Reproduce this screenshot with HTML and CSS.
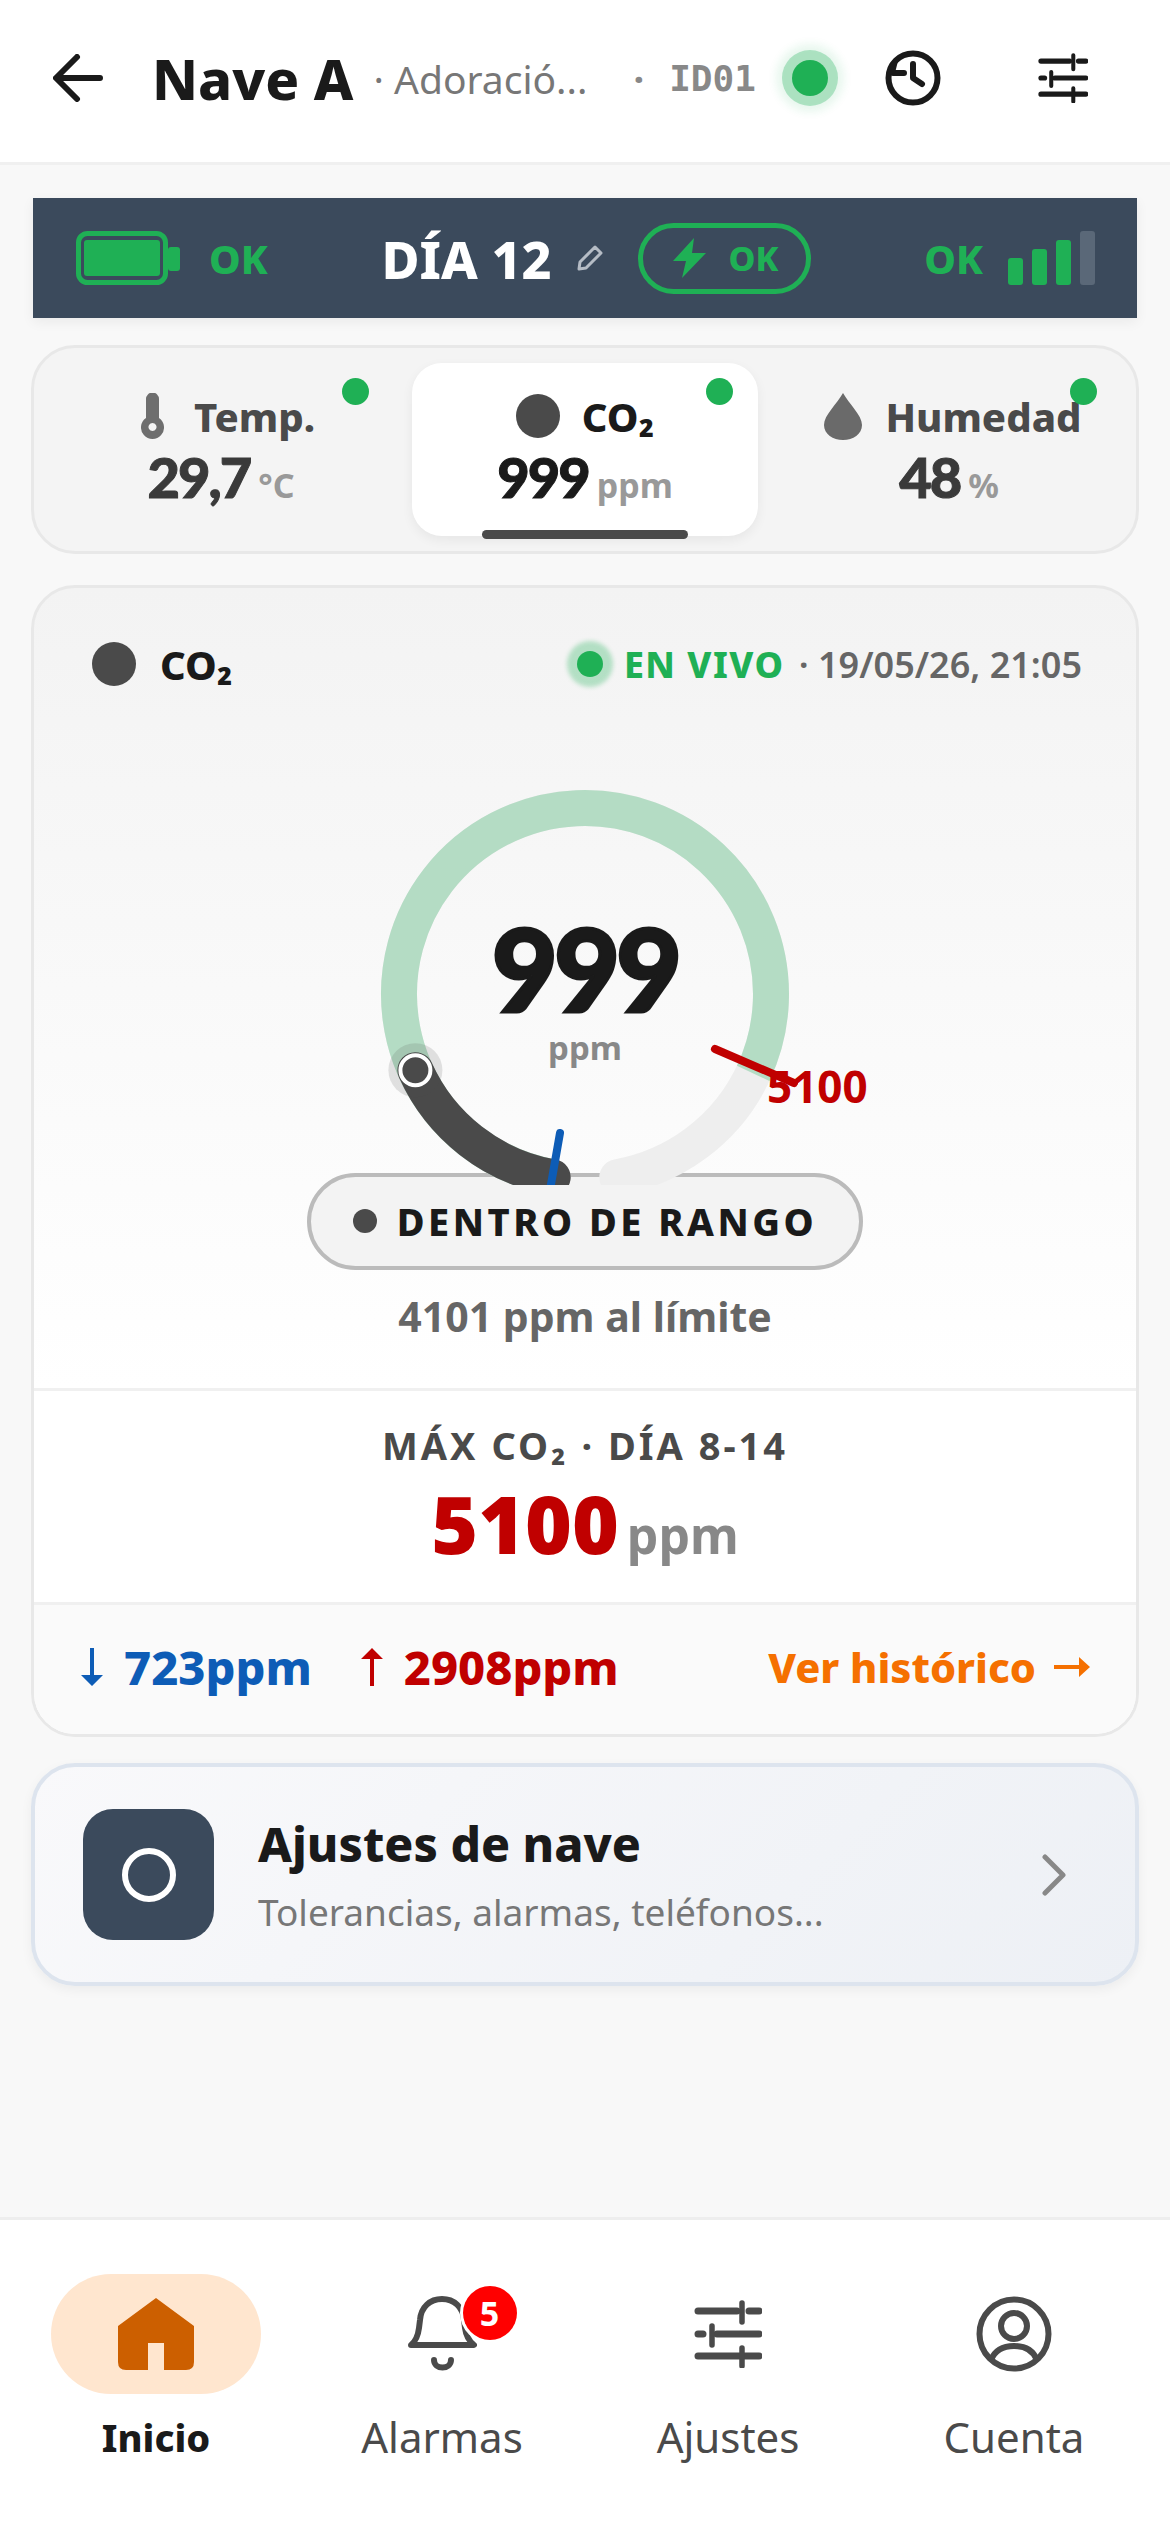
FILE: index.html
```html
<!DOCTYPE html>
<html lang="es">
  <head>
    <meta charset="UTF-8" />
    <meta name="viewport" content="width=device-width, initial-scale=1.0" />
    <title>Nave A</title>
    <link rel="stylesheet" href="styles.css">
  </head>
  <body>
    <svg class="defs" width="0" height="0">
      <symbol id="tune" viewBox="0 0 68 68">
        <path d="M4 11H43M55 11H65M4 34H9M23 34H65M4 56H65" stroke-width="7" stroke-linecap="round" />
        <path d="M48 3V22M18 26V45M48 48V66" stroke-width="5.500" stroke-linecap="round" />
      </symbol>
    </svg>

    <header class="topbar">
      <svg class="back" viewBox="0 0 50 48"><path d="M47 24H4M24 3L3 24L24 45" /></svg>
      <span class="title">Nave A</span>
      <span class="place">· Adoració...</span>
      <span class="sep">·</span>
      <span class="device">ID01</span>
      <span class="status-dot"></span>
      <svg class="history" viewBox="0 0 60 60">
        <circle cx="30" cy="30" r="24.500" />
        <path d="M10 25H21M30 16V30L39 36" />
        <path class="history-notch" d="M7 27V18L16 9L12 25Z" />
      </svg>
      <svg class="tune-top"><use href="#tune" /></svg>
    </header>

    <section class="banner">
      <div class="banner-group">
        <svg class="battery" viewBox="0 0 104 54">
          <rect x="2.500" y="2.500" width="87" height="49" rx="9" fill="none" stroke="#1fb055" stroke-width="5" />
          <rect x="8" y="9" width="76" height="36" rx="3" fill="#1fb055" />
          <rect x="92" y="16" width="12" height="24" rx="3" fill="#1fb055" />
        </svg>
        <span class="ok">OK</span>
      </div>
      <div class="banner-group banner-mid">
        <span class="day">DÍA 12</span>
        <svg class="pencil" viewBox="0 0 28 28"><path d="M3 25L4 18L19 3L25 9L10 24Z" /></svg>
        <span class="power">
          <svg class="bolt" viewBox="0 0 33 40"><path d="M21 0L0 23H13L9 40L33 15H19Z" /></svg>
          <span>OK</span>
        </span>
      </div>
      <div class="banner-group">
        <span class="ok ok-right">OK</span>
        <div class="bars">
          <i class="bar bar-1"></i><i class="bar bar-2"></i><i class="bar bar-3"></i><i class="bar bar-4"></i>
        </div>
      </div>
    </section>

    <section class="tabs">
      <div class="tab">
        <i class="tab-dot"></i>
        <div class="tab-label tab-label-temp">
          <svg class="thermo" viewBox="0 0 23 46"><path fill-rule="evenodd" d="M5 6a6.500 6.500 0 0 1 13 0V25a11.500 11.500 0 1 1-13 0ZM11.500 30a4 4 0 1 0 .01 0Z" /></svg>
          <span>Temp.</span>
        </div>
        <div class="tab-value">29,7<small>°C</small></div>
      </div>
      <div class="tab tab-active">
        <i class="tab-dot"></i>
        <div class="tab-label"><i class="gas-dot"></i><span>CO₂</span></div>
        <div class="tab-value">999<small>ppm</small></div>
        <i class="tab-line"></i>
      </div>
      <div class="tab">
        <i class="tab-dot"></i>
        <div class="tab-label tab-label-hum">
          <svg class="drop" viewBox="0 0 38 47"><path d="M19 0C25 11 38 22 38 32C38 41 29 47 19 47C9 47 0 41 0 32C0 22 13 11 19 0Z" /></svg>
          <span>Humedad</span>
        </div>
        <div class="tab-value">48<small>%</small></div>
      </div>
    </section>

    <section class="card">
      <div class="card-head">
        <div class="card-name"><i class="gas-dot"></i><span>CO₂</span></div>
        <div class="live">
          <i class="live-dot"></i>
          <span class="live-text">EN VIVO</span>
          <span class="live-date">· 19/05/26, 21:05</span>
        </div>
      </div>

      <div class="gauge">
        <svg class="gauge-svg" width="1102" height="425" viewBox="0 0 1102 425">
          <path d="M518.700 417.200A186 186 0 1 1 583.300 417.200" fill="none" stroke="#eeeeee" stroke-width="36" stroke-linecap="round" />
          <path d="M518.700 417.200A186 186 0 1 1 719.200 313.400" fill="none" stroke="#b4dcc4" stroke-width="36" />
          <path d="M518.700 417.200A186 186 0 0 1 381.400 310.200" fill="none" stroke="#4a4a4a" stroke-width="36" stroke-linecap="round" />
          <circle cx="381.400" cy="310.200" r="27" fill="#4a4a4a" fill-opacity="0.15" />
          <circle cx="381.400" cy="310.200" r="15" fill="#4a4a4a" stroke="#fff" stroke-width="4" />
          <path d="M526 373L516 430" stroke="#0d5cb6" stroke-width="8" stroke-linecap="round" />
          <path d="M681 289L760 323" stroke="#c00000" stroke-width="8" stroke-linecap="round" />
          <text class="limit-label" x="733" y="343">5100</text>
        </svg>
        <div class="gauge-center">
          <div class="gauge-value">999</div>
          <div class="gauge-unit">ppm</div>
        </div>
      </div>

      <div class="range-pill"><i class="range-dot"></i><span>DENTRO DE RANGO</span></div>
      <div class="to-limit">4101 ppm al límite</div>

      <div class="max-box">
        <div class="max-title">MÁX CO₂ · DÍA 8-14</div>
        <div class="max-value">5100<small>ppm</small></div>
      </div>

      <div class="card-foot">
        <svg class="arrow low-arrow" viewBox="0 0 24 38"><path d="M10 0H14V27H23L12 38L1 27H10Z" /></svg>
        <span class="low">723ppm</span>
        <svg class="arrow high-arrow" viewBox="0 0 24 38"><path d="M10 38H14V11H23L12 0L1 11H10Z" /></svg>
        <span class="high">2908ppm</span>
        <span class="more">Ver histórico</span>
        <svg class="more-arrow" viewBox="0 0 36 20"><path d="M0 8H25V0L36 10L25 20V12H0Z" /></svg>
      </div>
    </section>

    <section class="settings">
      <div class="settings-icon"><i></i></div>
      <div class="settings-text">
        <div class="settings-title">Ajustes de nave</div>
        <div class="settings-sub">Tolerancias, alarmas, teléfonos...</div>
      </div>
      <svg class="chevron" viewBox="0 0 24 42"><path d="M3 3L21 21L3 39" /></svg>
    </section>

    <nav class="nav">
      <div class="nav-item nav-active">
        <div class="nav-icon">
          <svg class="home" viewBox="0 0 76 72"><path d="M38 0L76 28V64Q76 72 68 72H46V45H30V72H8Q0 72 0 64V28Z" /></svg>
        </div>
        <span>Inicio</span>
      </div>
      <div class="nav-item">
        <div class="nav-icon">
          <div class="bell-wrap">
            <svg class="bell" viewBox="0 0 69 76">
              <path d="M3 49C8 45 10 40 11 32L12 24C13 11 22 3 34 3C46 3 55 11 56 24L57 32C58 40 61 45 66 49Z" />
              <path d="M26 64C26 74 43 74 43 64" />
            </svg>
            <b class="badge">5</b>
          </div>
        </div>
        <span>Alarmas</span>
      </div>
      <div class="nav-item">
        <div class="nav-icon"><svg class="tune-nav"><use href="#tune" /></svg></div>
        <span>Ajustes</span>
      </div>
      <div class="nav-item">
        <div class="nav-icon">
          <svg class="user" viewBox="0 0 76 76">
            <circle cx="38" cy="38" r="34.500" />
            <circle cx="38" cy="30" r="13" />
            <path d="M15 64C19 54 28 50 38 50C48 50 57 54 61 64" />
          </svg>
        </div>
        <span>Cuenta</span>
      </div>
    </nav>
  </body>
</html>
```

FILE: styles.css
```css
* {
  box-sizing: border-box;
}

body {
  margin: 0;
  width: 1170px;
  height: 2532px;
  overflow: hidden;
  display: flex;
  flex-direction: column;
  background-color: #f8f8f8;
  color: #1a1a1a;
  font-family: "Noto Sans", "Open Sans", sans-serif;
}

i {
  display: block;
}

.defs {
  position: absolute;
}

/* top bar */
.topbar {
  height: 165px;
  flex: none;
  display: flex;
  align-items: center;
  padding: 0 0 6px 53px;
  background-color: #fff;
  border-bottom: 3px solid #f0f0f0;
}

.back {
  width: 50px;
  height: 48px;
  fill: none;
  stroke: #1a1a1a;
  stroke-width: 6;
  stroke-linecap: round;
  stroke-linejoin: round;
}

.title {
  margin-left: 49px;
  font-size: 56px;
  font-weight: 800;
}

.place {
  margin-left: 20px;
  font-size: 39px;
  color: #777;
}

.sep {
  margin-left: 46px;
  font-size: 38px;
  font-weight: 700;
  color: #888;
}

.device {
  margin-left: 25px;
  font-family: "DejaVu Sans Mono", monospace;
  font-size: 36px;
  font-weight: 700;
  color: #888;
}

.status-dot {
  width: 36px;
  height: 36px;
  margin-left: 36px;
  border-radius: 50%;
  background-color: #1fb055;
  box-shadow: 0 0 0 10px rgba(31, 176, 85, 0.3), 0 0 8px 16px rgba(31, 176, 85, 0.1);
}

.history {
  width: 60px;
  height: 60px;
  margin-left: 55px;
  fill: none;
  stroke: #1a1a1a;
  stroke-width: 6;
  stroke-linecap: round;
  stroke-linejoin: round;
}

.history-notch {
  fill: #1a1a1a;
  stroke: none;
}

.tune-top {
  width: 50px;
  height: 50px;
  margin-left: 95px;
  fill: none;
  stroke: #1a1a1a;
}

/* status banner */
.banner {
  height: 120px;
  flex: none;
  margin: 33px 33px 0;
  padding: 0 42px 0 43px;
  display: flex;
  align-items: center;
  justify-content: space-between;
  background-color: #3b4a5c;
  box-shadow: 0 4px 12px rgba(0, 0, 0, 0.06);
}

.banner-group {
  display: flex;
  align-items: center;
}

.battery {
  width: 104px;
  height: 54px;
}

.ok {
  margin-left: 29px;
  font-size: 40px;
  font-weight: 800;
  color: #1fb055;
}

.ok-right {
  margin-left: 0;
  margin-right: 25px;
}

.day {
  font-size: 52px;
  font-weight: 800;
  color: #fff;
}

.pencil {
  width: 28px;
  height: 28px;
  margin-left: 24px;
  fill: none;
  stroke: #b5bcc5;
  stroke-width: 3;
  stroke-linejoin: round;
}

.power {
  width: 173px;
  height: 71px;
  margin-left: 34px;
  padding-left: 30px;
  display: flex;
  align-items: center;
  gap: 23px;
  border: 5px solid #1fb055;
  border-radius: 36px;
  font-size: 34px;
  font-weight: 800;
  color: #1fb055;
}

.bolt {
  width: 33px;
  height: 40px;
  fill: #1fb055;
}

.bars {
  display: flex;
  align-items: flex-end;
  gap: 9px;
  height: 54px;
}

.bar {
  width: 15px;
  border-radius: 3px;
  background-color: #1fb055;
}

.bar-1 {
  height: 27px;
}

.bar-2 {
  height: 36px;
}

.bar-3 {
  height: 45px;
}

.bar-4 {
  height: 54px;
  background-color: #5a6878;
}

/* sensor tabs */
.tabs {
  height: 209px;
  flex: none;
  margin: 27px 31px 0;
  padding: 15px 14px;
  display: grid;
  grid-template-columns: repeat(3, 346px);
  gap: 18px;
  background-color: #f4f4f4;
  border: 3px solid #e8e8e8;
  border-radius: 44px;
}

.tab {
  position: relative;
  display: flex;
  flex-direction: column;
  align-items: center;
  padding-top: 26px;
  border-radius: 30px;
}

.tab-active {
  background-color: #fff;
  box-shadow: 0 4px 12px rgba(0, 0, 0, 0.06);
}

.tab-dot {
  position: absolute;
  top: 15px;
  right: 25px;
  width: 27px;
  height: 27px;
  border-radius: 50%;
  background-color: #1fb055;
}

.tab-line {
  position: absolute;
  bottom: -3px;
  left: 70px;
  width: 206px;
  height: 9px;
  border-radius: 5px;
  background-color: #4a4a4a;
}

.tab-label {
  height: 54px;
  display: flex;
  align-items: center;
  gap: 22px;
  font-size: 40px;
  font-weight: 800;
  color: #4a4a4a;
}

.tab-label-temp {
  margin-left: 14px;
  gap: 30px;
}

.tab-label-hum {
  margin-left: 8px;
  gap: 23px;
}

.tab-active .tab-label {
  color: #1a1a1a;
}

.thermo {
  width: 23px;
  height: 46px;
  fill: #6e6e6e;
}

.drop {
  width: 38px;
  height: 47px;
  fill: #6a6a6a;
}

.gas-dot {
  width: 44px;
  height: 44px;
  border-radius: 50%;
  background-color: #4a4a4a;
}

.tab-value {
  margin-top: 2px;
  font-family: Lato, "Noto Sans", sans-serif;
  font-size: 56px;
  line-height: 64px;
  font-weight: 900;
  letter-spacing: -2px;
  color: #3a3a3a;
  -webkit-text-stroke: 1px currentColor;
}

.tab-active .tab-value {
  color: #1a1a1a;
}

.tab-value small {
  margin-left: 8px;
  font-family: "Noto Sans", sans-serif;
  font-size: 34px;
  font-weight: 700;
  letter-spacing: 0;
  color: #999;
  -webkit-text-stroke: 0;
}

/* main card */
.card {
  height: 1152px;
  flex: none;
  margin: 31px 31px 0;
  overflow: hidden;
  background: linear-gradient(#f3f3f3, #fff 800px);
  border: 3px solid #e8e8e8;
  border-radius: 44px;
}

.card-head {
  height: 152px;
  padding: 0 54px 0 58px;
  display: flex;
  align-items: center;
  justify-content: space-between;
}

.card-name {
  display: flex;
  align-items: center;
  gap: 24px;
  font-size: 40px;
  font-weight: 800;
}

.live {
  display: flex;
  align-items: center;
  font-size: 36px;
}

.live-dot {
  width: 26px;
  height: 26px;
  margin-right: 21px;
  border-radius: 50%;
  background-color: #1fb055;
  box-shadow: 0 0 4px 10px rgba(31, 176, 85, 0.3);
}

.live-text {
  font-weight: 800;
  letter-spacing: 1.500px;
  color: #1fb055;
}

.live-date {
  margin-left: 14px;
  font-weight: 600;
  color: #666;
}

.gauge {
  position: relative;
  z-index: 1;
  height: 425px;
  margin-top: 20px;
  overflow: hidden;
}

.gauge-svg {
  display: block;
}

.limit-label {
  font-size: 44px;
  font-weight: 700;
  fill: #c00000;
}

.gauge-center {
  position: absolute;
  top: 156px;
  left: 0;
  width: 100%;
  text-align: center;
}

.gauge-value {
  font-family: Lato, "Noto Sans", sans-serif;
  font-size: 114px;
  line-height: 104px;
  font-weight: 900;
  letter-spacing: -4px;
  -webkit-text-stroke: 3px #1a1a1a;
}

.gauge-unit {
  margin-top: 8px;
  font-size: 33px;
  line-height: 40px;
  font-weight: 700;
  color: #888;
}

.range-pill {
  width: 556px;
  height: 97px;
  margin: -12px auto 0;
  padding-bottom: 2px;
  display: flex;
  align-items: center;
  justify-content: center;
  gap: 20px;
  background-color: #f3f3f3;
  border: 4px solid #bbb;
  border-radius: 49px;
  font-size: 38px;
  font-weight: 800;
  letter-spacing: 3.500px;
}

.range-dot {
  width: 24px;
  height: 24px;
  border-radius: 50%;
  background-color: #4a4a4a;
}

.to-limit {
  margin-top: 20px;
  text-align: center;
  font-size: 41px;
  line-height: 52px;
  font-weight: 700;
  color: #666;
}

.max-box {
  height: 217px;
  margin-top: 46px;
  padding-top: 29px;
  text-align: center;
  background-color: #fff;
  border-top: 3px solid #f0f0f0;
  border-bottom: 3px solid #f0f0f0;
}

.max-title {
  font-size: 38px;
  line-height: 50px;
  font-weight: 700;
  letter-spacing: 3px;
  color: #4a4a4a;
}

.max-value {
  margin-top: 3px;
  font-size: 80px;
  line-height: 100px;
  font-weight: 900;
  color: #c00000;
}

.max-value small {
  margin-left: 8px;
  font-size: 50px;
  font-weight: 700;
  color: #888;
}

.card-foot {
  height: 132px;
  padding: 0 46px 8px;
  display: flex;
  align-items: center;
  background-color: #fafafa;
  font-size: 47px;
  font-weight: 800;
}

.arrow {
  width: 24px;
  height: 38px;
  flex: none;
}

.low-arrow {
  fill: #0d5cb6;
}

.high-arrow {
  margin-left: 48px;
  fill: #c00000;
}

.low {
  margin-left: 20px;
  color: #0d5cb6;
}

.high {
  margin-left: 20px;
  color: #c00000;
}

.more {
  margin-left: auto;
  font-size: 41.500px;
  color: #f57000;
}

.more-arrow {
  width: 36px;
  height: 20px;
  margin-left: 18px;
  fill: #f57000;
}

/* settings link */
.settings {
  height: 223px;
  flex: none;
  margin: 26px 31px 0;
  padding: 0 69px 0 48px;
  display: flex;
  align-items: center;
  background: linear-gradient(135deg, #f9f9fb, #edf0f5);
  border: 4px solid #dde4ee;
  border-radius: 44px;
  box-shadow: 0 4px 12px rgba(0, 0, 0, 0.05);
}

.settings-icon {
  width: 131px;
  height: 131px;
  flex: none;
  display: flex;
  align-items: center;
  justify-content: center;
  background-color: #3b4a5c;
  border-radius: 30px;
}

.settings-icon i {
  width: 54px;
  height: 54px;
  border: 6px solid #fff;
  border-radius: 50%;
}

.settings-text {
  margin-left: 44px;
}

.settings-title {
  font-size: 48px;
  line-height: 60px;
  font-weight: 800;
}

.settings-sub {
  margin-top: 14px;
  font-size: 37px;
  line-height: 48px;
  color: #777;
}

.chevron {
  width: 24px;
  height: 42px;
  margin-left: auto;
  fill: none;
  stroke: #888;
  stroke-width: 5;
  stroke-linecap: round;
  stroke-linejoin: round;
}

/* bottom nav */
.nav {
  height: 315px;
  flex: none;
  margin-top: auto;
  padding: 54px 13px 0;
  display: grid;
  grid-template-columns: repeat(4, 1fr);
  background-color: #fff;
  border-top: 3px solid #eee;
}

.nav-item {
  display: flex;
  flex-direction: column;
  align-items: center;
  font-size: 42px;
  line-height: 50px;
  color: #4a4a4a;
}

.nav-icon {
  width: 210px;
  height: 120px;
  margin-bottom: 18px;
  display: flex;
  align-items: center;
  justify-content: center;
  border-radius: 60px;
}

.nav-active {
  font-size: 38px;
  font-weight: 800;
  color: #1a1a1a;
}

.nav-active .nav-icon {
  background-color: #ffe6cf;
}

.home {
  width: 76px;
  height: 72px;
  fill: #cc5f00;
}

.bell-wrap {
  position: relative;
  width: 69px;
  height: 76px;
}

.bell {
  display: block;
  width: 69px;
  height: 76px;
  fill: none;
  stroke: #4a4a4a;
  stroke-width: 6;
  stroke-linecap: round;
  stroke-linejoin: round;
}

.badge {
  position: absolute;
  top: -10px;
  left: 55px;
  width: 54px;
  height: 54px;
  border-radius: 50%;
  background-color: #f00;
  box-shadow: 0 0 0 3px #fff;
  color: #fff;
  font-size: 34px;
  line-height: 54px;
  text-align: center;
}

.tune-nav {
  width: 68px;
  height: 68px;
  fill: none;
  stroke: #4a4a4a;
}

.user {
  width: 76px;
  height: 76px;
  fill: none;
  stroke: #4a4a4a;
  stroke-width: 6;
}
```
